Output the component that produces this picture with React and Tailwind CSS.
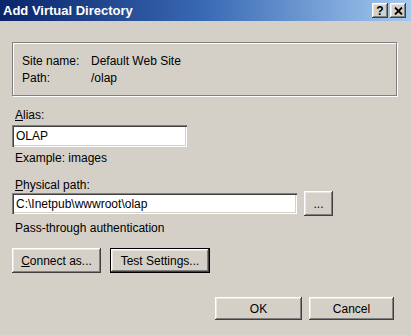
import React from "react";

const raised =
  "bg-[#d4d0c8] shadow-[inset_-1px_-1px_0_#404040,inset_1px_1px_0_#ffffff,inset_-2px_-2px_0_#808080,inset_2px_2px_0_#e8e6e1]";
const sunken =
  "bg-white shadow-[inset_1px_1px_0_#808080,inset_2px_2px_0_#404040,inset_-1px_-1px_0_#ffffff,inset_-2px_-2px_0_#d4d0c8]";

export default function App() {
  return (
    <div className="w-[411px] h-[335px] bg-[#d4d0c8] font-['Liberation_Sans',Arial,sans-serif] text-[12px] text-black overflow-hidden flex flex-col">
      {/* Title bar */}
      <div className="h-[21px] flex items-center bg-linear-to-r from-[#0a246a] via-[#3a6ab4] to-[#a6caf0] pl-[3px] pr-[5px] shrink-0">
        <span className="text-white font-bold text-[13px] leading-none">Add Virtual Directory</span>
        <div className="ml-auto flex gap-[2px]">
          <div className={`${raised} w-[16px] h-[15px] flex items-center justify-center font-bold text-[12px] leading-none`}>?</div>
          <div className={`${raised} w-[16px] h-[15px] flex items-center justify-center`}>
            <svg width="9" height="8" viewBox="0 0 9 8">
              <path d="M1 0.5 L8 7.5 M8 0.5 L1 7.5" stroke="#000" strokeWidth="1.8" />
            </svg>
          </div>
        </div>
      </div>

      <div className="flex flex-col pl-[12px] pr-[12px] pt-[21px]">
        {/* Group box */}
        <div className="w-[385px] h-[54px] border border-[#808080] shadow-[inset_1px_1px_0_#ffffff,1px_1px_0_#ffffff] pl-[9px] pt-[10px]">
          <div className="flex leading-[17px]">
            <span className="w-[69px]">Site name:</span>
            <span>Default Web Site</span>
          </div>
          <div className="flex leading-[17px]">
            <span className="w-[69px]">Path:</span>
            <span>/olap</span>
          </div>
        </div>

        <div className="mt-[11px] leading-[16px] pl-[3px]">
          <span className="underline">A</span>lias:
        </div>
        <div className={`${sunken} mt-[2px] w-[175px] h-[22px] flex items-center pl-[4px]`}>OLAP</div>

        <div className="mt-[3px] leading-[16px] pl-[3px]">Example: images</div>

        <div className="mt-[11px] leading-[16px] pl-[3px]">
          <span className="underline">P</span>hysical path:
        </div>
        <div className="-mt-[2px] flex items-center">
          <div className={`${sunken} w-[285px] h-[21px] flex items-center pl-[4px]`}>C:\Inetpub\wwwroot\olap</div>
          <div className={`${raised} ml-[7px] w-[29px] h-[25px] flex items-center justify-center text-[12px] leading-none`}>...</div>
        </div>

        <div className="mt-[4px] leading-[16px] pl-[3px]">Pass-through authentication</div>

        <div className="mt-[12px] flex">
          <div className={`${raised} w-[89px] h-[25px] flex items-center justify-center`}>
            <span>
              <span className="underline">C</span>onnect as...
            </span>
          </div>
          <div className="ml-[9px] w-[100px] h-[25px] border border-black">
            <div className={`${raised} w-full h-full flex items-center justify-center`}>
              <span>
                Test Settin<span className="underline">g</span>s...
              </span>
            </div>
          </div>
        </div>

        <div className="mt-[24px] flex justify-end pr-[5px] gap-[7px]">
          <div className={`${raised} w-[87px] h-[23px] flex items-center justify-center`}>OK</div>
          <div className={`${raised} w-[85px] h-[23px] flex items-center justify-center`}>Cancel</div>
        </div>
      </div>
    </div>
  );
}
